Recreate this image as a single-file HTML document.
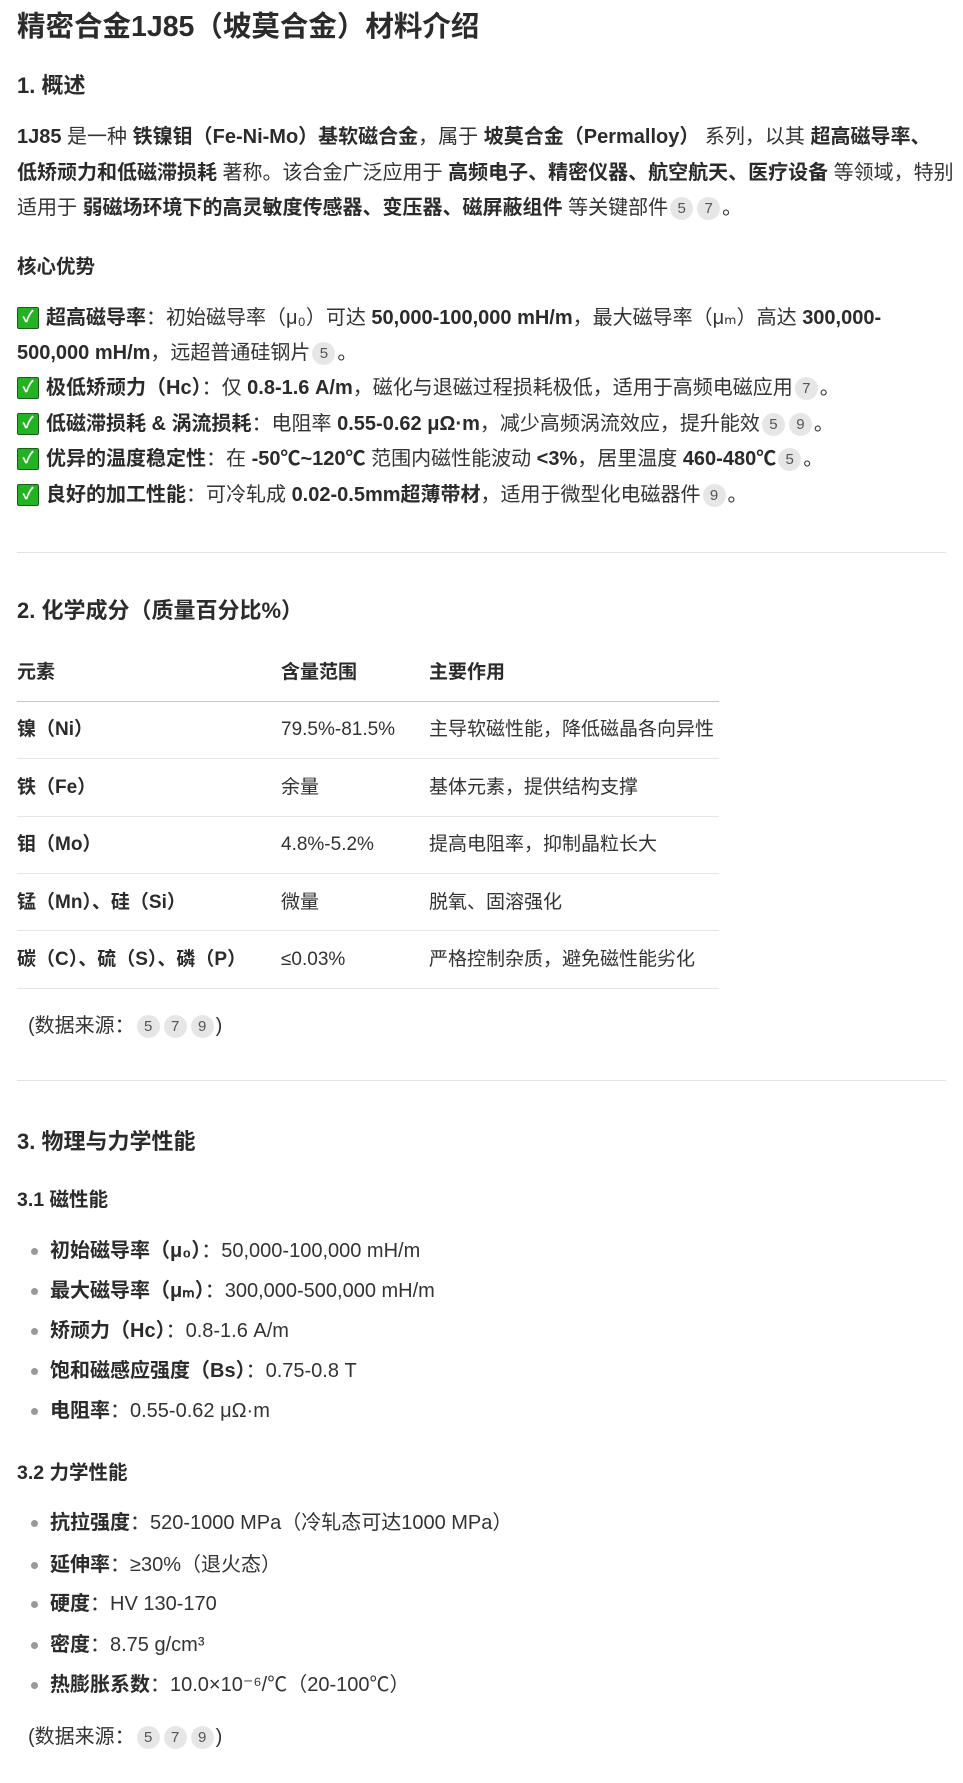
<!DOCTYPE html>
<html><head><meta charset="utf-8"><style>
body{margin:0;width:963px;height:1783px;background:#fff;position:relative;overflow:hidden;color:#333;font-family:"Liberation Sans","Noto Sans CJK SC",sans-serif;}
.l{position:absolute;left:17px;white-space:nowrap;line-height:36px;font-size:20px;}
b{font-weight:bold;color:#2b2b2b}
.h1{font-size:28.5px;font-weight:bold;line-height:40px;color:#2b2b2b}
.h2{font-size:22px;font-weight:bold;color:#2b2b2b}
.h3{font-size:19.5px;font-weight:bold;color:#2b2b2b}
.bd{display:inline-block;width:23px;height:23px;border-radius:12px;background:#e6e6e6;color:#555;font-size:15px;line-height:23px;text-align:center;vertical-align:1px;margin:0 2px}
.ck{display:inline-block;width:20px;height:20px;background:#22b322;border:1px solid #1a5c1a;border-radius:2px;color:#fff;font-size:16px;line-height:20px;text-align:center;vertical-align:2px;margin-right:7px;font-weight:bold}
.hr{position:absolute;left:17px;width:929px;height:1px;background:#e3e3e3}
.tl{position:absolute;left:17px;width:702px;height:1px;background:#e5e5e5}
.c{position:absolute;white-space:nowrap;font-size:19px;line-height:30px}
.dot{position:absolute;left:31px;width:7px;height:7px;border-radius:4px;background:#999}
.bl{left:50px}
</style></head><body>
<div class="l h1" style="top:7px">精密合金1J85（坡莫合金）材料介绍</div>
<div class="l h2" style="top:68px">1. 概述</div>
<div class="l" style="top:119px"><b>1J85</b> 是一种 <b>铁镍钼（Fe-Ni-Mo）基软磁合金</b>，属于 <b>坡莫合金（Permalloy）</b> 系列，以其 <b>超高磁导率、</b></div>
<div class="l" style="top:155px"><b>低矫顽力和低磁滞损耗</b> 著称。该合金广泛应用于 <b>高频电子、精密仪器、航空航天、医疗设备</b> 等领域，特别</div>
<div class="l" style="top:190px">适用于 <b>弱磁场环境下的高灵敏度传感器、变压器、磁屏蔽组件</b> 等关键部件<span class="bd">5</span><span class="bd">7</span>。</div>
<div class="l h3" style="top:249px">核心优势</div>
<div class="l" style="top:300px"><span class="ck">✓</span><b>超高磁导率</b>：初始磁导率（μ₀）可达 <b>50,000-100,000 mH/m</b>，最大磁导率（μₘ）高达 <b>300,000-</b></div>
<div class="l" style="top:335px"><b>500,000 mH/m</b>，远超普通硅钢片<span class="bd">5</span>。</div>
<div class="l" style="top:370px"><span class="ck">✓</span><b>极低矫顽力（Hc）</b>：仅 <b>0.8-1.6 A/m</b>，磁化与退磁过程损耗极低，适用于高频电磁应用<span class="bd">7</span>。</div>
<div class="l" style="top:406px"><span class="ck">✓</span><b>低磁滞损耗 &amp; 涡流损耗</b>：电阻率 <b>0.55-0.62 μΩ·m</b>，减少高频涡流效应，提升能效<span class="bd">5</span><span class="bd">9</span>。</div>
<div class="l" style="top:441px"><span class="ck">✓</span><b>优异的温度稳定性</b>：在 <b>-50℃~120℃</b> 范围内磁性能波动 <b>&lt;3%</b>，居里温度 <b>460-480℃</b><span class="bd">5</span>。</div>
<div class="l" style="top:477px"><span class="ck">✓</span><b>良好的加工性能</b>：可冷轧成 <b>0.02-0.5mm超薄带材</b>，适用于微型化电磁器件<span class="bd">9</span>。</div>
<div class="hr" style="top:552px"></div>
<div class="l h2" style="top:593px">2. 化学成分（质量百分比%）</div>
<div class="c" style="left:17px;top:658px"><b>元素</b></div><div class="c" style="left:281px;top:658px"><b>含量范围</b></div><div class="c" style="left:429px;top:658px"><b>主要作用</b></div>
<div class="tl" style="top:701px;background:#c8c8c8"></div>
<div class="c" style="left:17px;top:715px"><b>镍（Ni）</b></div><div class="c" style="left:281px;top:715px">79.5%-81.5%</div><div class="c" style="left:429px;top:715px">主导软磁性能，降低磁晶各向异性</div>
<div class="tl" style="top:758px"></div>
<div class="c" style="left:17px;top:773px"><b>铁（Fe）</b></div><div class="c" style="left:281px;top:773px">余量</div><div class="c" style="left:429px;top:773px">基体元素，提供结构支撑</div>
<div class="tl" style="top:816px"></div>
<div class="c" style="left:17px;top:830px"><b>钼（Mo）</b></div><div class="c" style="left:281px;top:830px">4.8%-5.2%</div><div class="c" style="left:429px;top:830px">提高电阻率，抑制晶粒长大</div>
<div class="tl" style="top:873px"></div>
<div class="c" style="left:17px;top:888px"><b>锰（Mn）、硅（Si）</b></div><div class="c" style="left:281px;top:888px">微量</div><div class="c" style="left:429px;top:888px">脱氧、固溶强化</div>
<div class="tl" style="top:930px"></div>
<div class="c" style="left:17px;top:945px"><b>碳（C）、硫（S）、磷（P）</b></div><div class="c" style="left:281px;top:945px">≤0.03%</div><div class="c" style="left:429px;top:945px">严格控制杂质，避免磁性能劣化</div>
<div class="tl" style="top:988px"></div>
<div class="l" style="left:28px;top:1008px">(数据来源：<span class="bd">5</span><span class="bd">7</span><span class="bd">9</span>)</div>
<div class="hr" style="top:1080px"></div>
<div class="l h2" style="top:1124px">3. 物理与力学性能</div>
<div class="l h3" style="top:1182px">3.1 磁性能</div>
<div class="dot" style="top:1248px"></div><div class="l bl" style="top:1233px"><b>初始磁导率（μ₀）</b>：50,000-100,000 mH/m</div>
<div class="dot" style="top:1288px"></div><div class="l bl" style="top:1273px"><b>最大磁导率（μₘ）</b>：300,000-500,000 mH/m</div>
<div class="dot" style="top:1328px"></div><div class="l bl" style="top:1313px"><b>矫顽力（Hc）</b>：0.8-1.6 A/m</div>
<div class="dot" style="top:1368px"></div><div class="l bl" style="top:1353px"><b>饱和磁感应强度（Bs）</b>：0.75-0.8 T</div>
<div class="dot" style="top:1408px"></div><div class="l bl" style="top:1393px"><b>电阻率</b>：0.55-0.62 μΩ·m</div>
<div class="l h3" style="top:1455px">3.2 力学性能</div>
<div class="dot" style="top:1520px"></div><div class="l bl" style="top:1505px"><b>抗拉强度</b>：520-1000 MPa（冷轧态可达1000 MPa）</div>
<div class="dot" style="top:1562px"></div><div class="l bl" style="top:1547px"><b>延伸率</b>：≥30%（退火态）</div>
<div class="dot" style="top:1601px"></div><div class="l bl" style="top:1586px"><b>硬度</b>：HV 130-170</div>
<div class="dot" style="top:1642px"></div><div class="l bl" style="top:1627px"><b>密度</b>：8.75 g/cm³</div>
<div class="dot" style="top:1682px"></div><div class="l bl" style="top:1667px"><b>热膨胀系数</b>：10.0×10⁻⁶/℃（20-100℃）</div>
<div class="l" style="left:28px;top:1719px">(数据来源：<span class="bd">5</span><span class="bd">7</span><span class="bd">9</span>)</div>
</body></html>
